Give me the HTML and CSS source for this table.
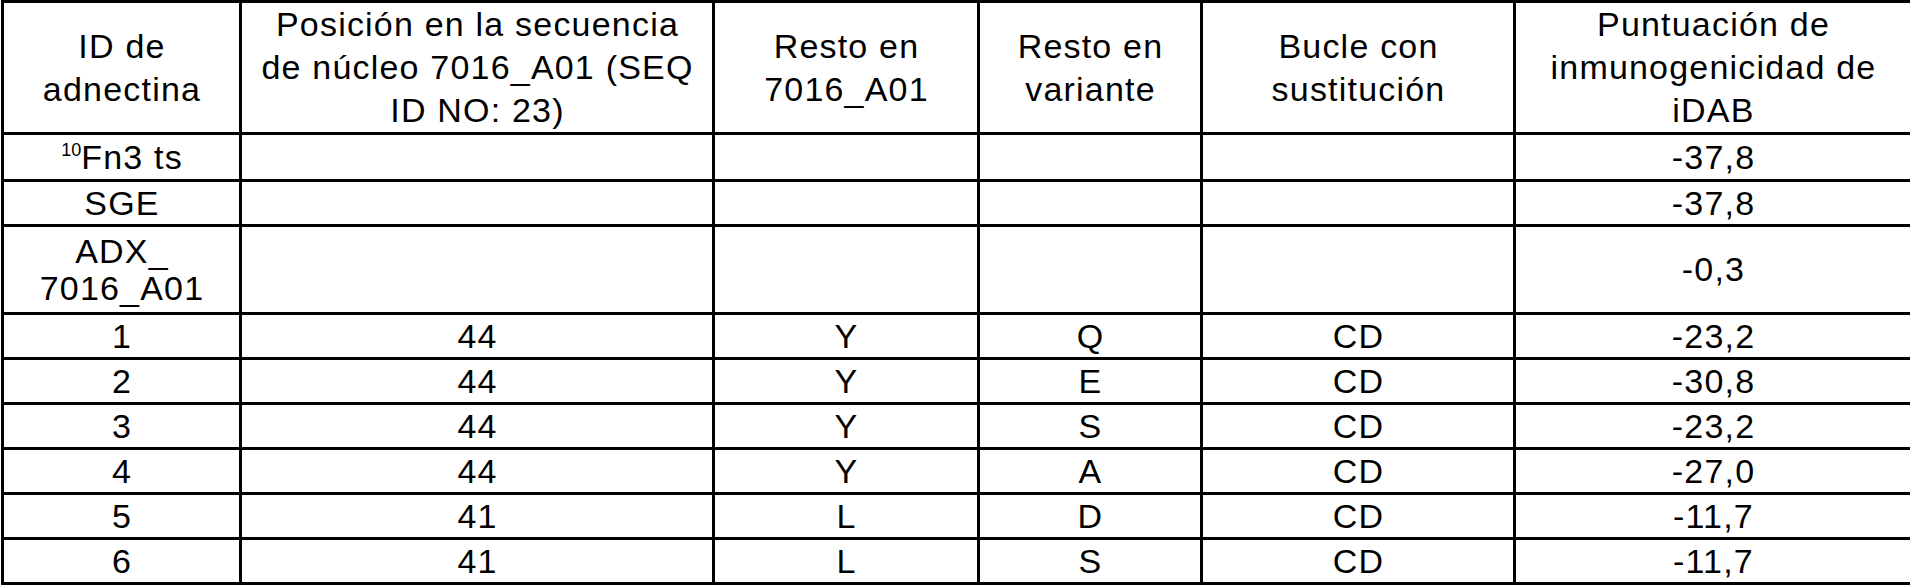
FILE: index.html
```html
<!DOCTYPE html>
<html lang="es">
<head>
<meta charset="utf-8">
<title>Tabla de inmunogenicidad</title>
<link rel="stylesheet" href="styles.css">
</head>
<body>
<table class="data">
  <colgroup>
    <col class="c1"><col class="c2"><col class="c3"><col class="c4"><col class="c5"><col class="c6">
  </colgroup>
  <thead>
    <tr class="head">
      <th>ID de<br>adnectina</th>
      <th>Posición en la secuencia<br>de núcleo 7016_A01 (SEQ<br>ID NO: 23)</th>
      <th>Resto en<br>7016_A01</th>
      <th>Resto en<br>variante</th>
      <th>Bucle con<br>sustitución</th>
      <th>Puntuación de<br>inmunogenicidad de<br>iDAB</th>
    </tr>
  </thead>
  <tbody>
    <tr class="r47"><td><sup class="sup">10</sup>Fn3 ts</td><td></td><td></td><td></td><td></td><td>-37,8</td></tr>
    <tr class="r45"><td>SGE</td><td></td><td></td><td></td><td></td><td>-37,8</td></tr>
    <tr class="r88"><td>ADX_<br>7016_A01</td><td></td><td></td><td></td><td></td><td>-0,3</td></tr>
    <tr class="r45"><td>1</td><td>44</td><td>Y</td><td>Q</td><td>CD</td><td>-23,2</td></tr>
    <tr class="r45"><td>2</td><td>44</td><td>Y</td><td>E</td><td>CD</td><td>-30,8</td></tr>
    <tr class="r45"><td>3</td><td>44</td><td>Y</td><td>S</td><td>CD</td><td>-23,2</td></tr>
    <tr class="r45"><td>4</td><td>44</td><td>Y</td><td>A</td><td>CD</td><td>-27,0</td></tr>
    <tr class="r45"><td>5</td><td>41</td><td>L</td><td>D</td><td>CD</td><td>-11,7</td></tr>
    <tr class="r45"><td>6</td><td>41</td><td>L</td><td>S</td><td>CD</td><td>-11,7</td></tr>
  </tbody>
</table>
</body>
</html>
```

FILE: styles.css
```css
html, body {
  margin: 0;
  padding: 0;
  background: #ffffff;
}

body {
  padding-left: 1px;
  font-family: "Liberation Sans", Arial, sans-serif;
  color: #000000;
}

.data {
  border-collapse: collapse;
  table-layout: fixed;
  width: 1909px;
}

.c1 { width: 238px; }
.c2 { width: 473px; }
.c3 { width: 265px; }
.c4 { width: 223px; }
.c5 { width: 313px; }
.c6 { width: 397px; }

.data th,
.data td {
  border: 3px solid #000000;
  padding: 0 0 0 1px;
  text-align: center;
  vertical-align: middle;
  font-size: 34px;
  font-weight: normal;
  letter-spacing: 1.2px;
  line-height: 37px;
  white-space: nowrap;
}

.head { height: 132px; }
.head th { line-height: 43px; }

.r47 { height: 47px; }
.r45 { height: 45px; }
.r88 { height: 88px; }

.sup {
  font-size: 18px;
  letter-spacing: 0;
  vertical-align: 13px;
  line-height: 0;
}
```
